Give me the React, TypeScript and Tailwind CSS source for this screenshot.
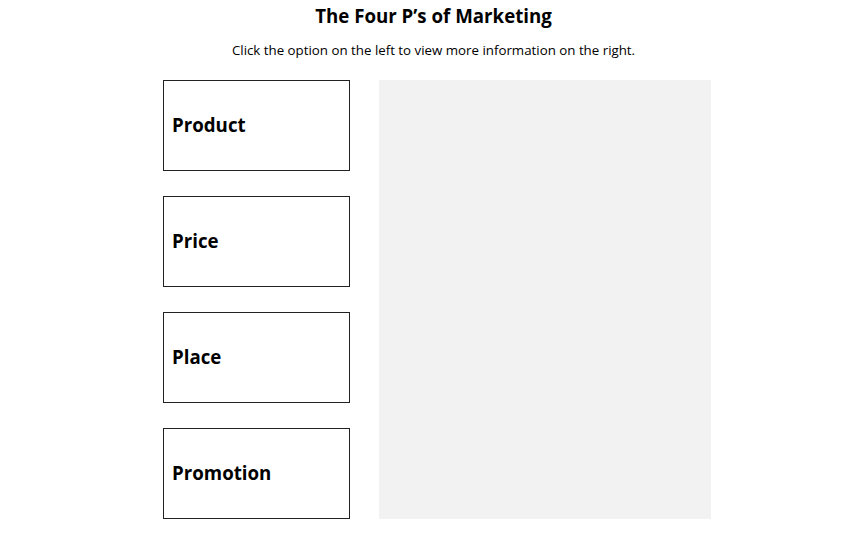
const options = ["Product", "Price", "Place", "Promotion"];

const App = () => {
  return (
    <div className="min-h-screen bg-white font-['Open_Sans',sans-serif] text-black">
      <h1 className="pt-[3px] text-center text-[18.7px] font-bold leading-[25px]">
        The Four P’s of Marketing
      </h1>
      <p className="mt-[13px] text-center text-[13.3px] leading-[19px]">
        Click the option on the left to view more information on the right.
      </p>
      <div className="mt-[20px] flex justify-center">
        <div className="flex gap-[29px] pl-[7px]">
          <div className="flex w-[187px] flex-col gap-[25px]">
            {options.map((label) => (
              <button
                key={label}
                className="flex h-[91px] items-center border border-[#222] bg-white pl-[8px] text-left text-[18.7px] font-bold"
              >
                {label}
              </button>
            ))}
          </div>
          <div className="h-[439px] w-[332px] bg-[#f2f2f2]" />
        </div>
      </div>
    </div>
  );
};

export default App;
